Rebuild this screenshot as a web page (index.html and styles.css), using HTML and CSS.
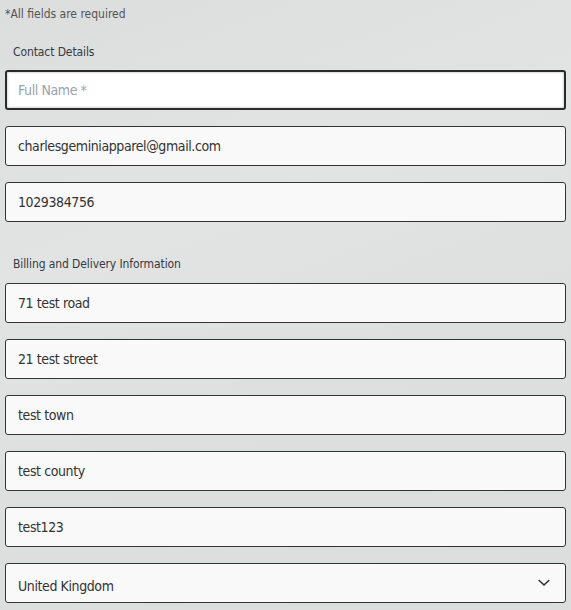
FILE: index.html
```html
<!DOCTYPE html>
<html lang="en">
<head>
<meta charset="utf-8">
<title>Checkout details</title>
<link rel="stylesheet" href="styles.css">
</head>
<body>
<form class="form">
  <p class="note">*All fields are required</p>
  <h3 class="section-label">Contact Details</h3>
  <div class="fields">
    <input class="field field--focus" type="text" placeholder="Full Name *">
    <input class="field" type="text" value="charlesgeminiapparel@gmail.com">
    <input class="field" type="text" value="1029384756">
  </div>
  <h3 class="section-label section-label--gap">Billing and Delivery Information</h3>
  <div class="fields">
    <input class="field" type="text" value="71 test road">
    <input class="field" type="text" value="21 test street">
    <input class="field" type="text" value="test town">
    <input class="field" type="text" value="test county">
    <input class="field" type="text" value="test123">
    <div class="field select">
      <span class="select-value">United Kingdom</span>
      <svg class="chev" width="12" height="8" viewBox="0 0 12 8"><path d="M1.2 1.5 L6 6 L10.8 1.5" fill="none" stroke="#333" stroke-width="1.6" stroke-linecap="round" stroke-linejoin="round"/></svg>
    </div>
  </div>
</form>
</body>
</html>
```
FILE: styles.css
```css
html, body {
  margin: 0;
  height: 100%;
}
body {
  padding: 0 5px;
  background: linear-gradient(160deg, #dcdddd 0%, #e2e3e3 35%, #dedfdf 60%, #dcdddd 100%);
  font-family: "DejaVu Sans Condensed", "DejaVu Sans", Roboto, sans-serif;
  color: #333;
  box-sizing: border-box;
}
.form {
  display: flex;
  flex-direction: column;
}
.note {
  margin: 0;
  line-height: 29px;
  font-size: 12px;
  color: #555;
}
.section-label {
  margin: 13px 0 8px;
  padding-left: 8px;
  line-height: 20px;
  font-size: 12px;
  font-weight: normal;
  color: #363a42;
  letter-spacing: -0.1px;
}
.section-label--gap {
  margin-top: 32px;
  margin-bottom: 9px;
}
.fields {
  display: flex;
  flex-direction: column;
  gap: 16px;
}
.field {
  box-sizing: border-box;
  width: 100%;
  height: 40px;
  margin: 0;
  padding: 0 12px;
  border: 1px solid #333;
  border-radius: 3px;
  background: #f9f9f9;
  font-family: inherit;
  font-size: 14px;
  letter-spacing: -0.4px;
  color: #333;
  outline: none;
}
.field--focus {
  border: 2px solid #2b2b2b;
  padding-left: 11px;
  background: #fff;
  box-shadow: inset 0 0 2px 1px rgba(0,0,0,0.15);
}
.field--focus::placeholder {
  color: #98a2ad;
}
.select {
  display: flex;
  align-items: center;
  justify-content: space-between;
  padding-right: 15px;
}
.select-value {
  padding-top: 6px;
}
.chev {
  display: block;
}
```
